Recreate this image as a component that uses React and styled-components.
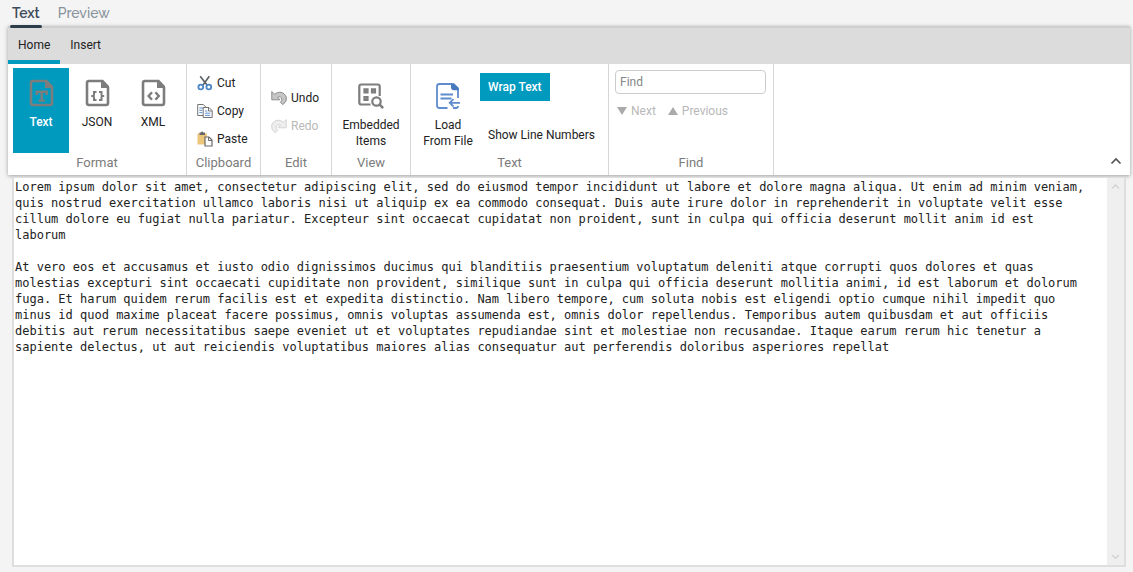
import React from "react";
import styled, { createGlobalStyle, css } from "styled-components";

const GlobalStyle = createGlobalStyle`
  *, *::before, *::after { box-sizing: border-box; }
  body {
    margin: 0;
    background: #f4f4f4;
    color: #222;
    font: 12px/16px Roboto, "Liberation Sans", sans-serif;
  }
  button, input, textarea {
    margin: 0;
    padding: 0;
    border: 0;
    background: none;
    color: inherit;
    font: inherit;
  }
`;

const accent = "#009abf";

const Page = styled.div`
  display: flex;
  flex-direction: column;
  min-height: 100vh;
  padding: 0 3px 5px 8px;
`;

const ViewTabs = styled.nav`
  display: flex;
  gap: 14px;
  padding-left: 2px;
  height: 26px;
`;

const ViewTab = styled.button`
  position: relative;
  height: 26px;
  padding: 0 2px;
  font: 500 14px/26px Raleway, Lato, sans-serif;
  font-weight: ${(p) => (p.$active ? 600 : 500)};
  color: ${(p) => (p.$active ? "#3c4b59" : "#87929b")};
  ${(p) =>
    p.$active &&
    css`
      &::after {
        content: "";
        position: absolute;
        left: 0;
        right: 0;
        bottom: -2px;
        height: 3px;
        border-radius: 2px;
        background: #2d3c49;
      }
    `}
`;

const Ribbon = styled.section`
  display: flex;
  flex-direction: column;
  box-shadow: 0 1px 4px rgba(0, 0, 0, 0.35);
`;

const RibbonTabs = styled.div`
  display: flex;
  height: 38px;
  background: #dcdcdc;
  border-top: 2px solid #cfcfcf;
`;

const RibbonTab = styled.button`
  padding: 2px 10px 0;
  border-bottom: 4px solid ${(p) => (p.$active ? accent : "transparent")};
  line-height: 30px;
`;

const RibbonBody = styled.div`
  display: flex;
  height: 111px;
  background: #fff;
`;

const Group = styled.div`
  display: flex;
  flex-direction: column;
  width: ${(p) => p.$width}px;
  border-right: 1px solid #d6d6d6;
`;

const GroupContent = styled.div`
  display: flex;
  flex: 1;
  padding: 4px 5px 0;
`;

const GroupLabel = styled.div`
  height: 21px;
  font-size: 13px;
  line-height: 18px;
  text-align: center;
  color: #7b7b7b;
`;

const LargeButton = styled.button`
  display: flex;
  flex-direction: column;
  align-items: center;
  gap: 5px;
  flex: 1;
  height: 85px;
  padding-top: ${(p) => (p.$twoLine ? 12 : 9)}px;
  background: ${(p) => (p.$active ? accent : "transparent")};
  color: ${(p) => (p.$active ? "#fff" : "inherit")};
  font-weight: ${(p) => (p.$active ? 500 : 400)};
  white-space: pre;
`;

const SmallColumn = styled.div`
  display: flex;
  flex-direction: column;
  justify-content: ${(p) => (p.$centered ? "center" : "flex-start")};
  padding: 1px 0 0 5px;
`;

const SmallButton = styled.button`
  display: flex;
  align-items: center;
  gap: 4px;
  height: 28px;
  &:disabled { color: #b8b8b8; }
`;

const ToggleColumn = styled.div`
  display: flex;
  flex-direction: column;
  align-items: flex-start;
  gap: 20px;
  padding-top: 5px;
`;

const ToggleButton = styled.button`
  height: 28px;
  padding: 0 8px;
  background: ${(p) => (p.$active ? accent : "transparent")};
  color: ${(p) => (p.$active ? "#fff" : "inherit")};
  font-weight: ${(p) => (p.$active ? 500 : 400)};
  white-space: nowrap;
`;

const FindPanel = styled.div`
  display: flex;
  flex: 1;
  flex-direction: column;
  gap: 3px;
  padding: 2px 2px 0 1px;
`;

const FindInput = styled.input`
  width: 100%;
  height: 24px;
  padding: 0 4px;
  border: 1px solid #ccc;
  border-radius: 4px;
  background: #fff;
  &::placeholder { color: #858585; opacity: 1; }
`;

const FindActions = styled.div`
  display: flex;
  gap: 12px;
  padding-left: 2px;
`;

const Collapse = styled.button`
  display: flex;
  align-self: flex-end;
  margin-left: auto;
  padding: 8px;
`;

const Editor = styled.div`
  display: flex;
  flex: 1;
  margin: 2px 4px 0;
  border: 2px solid #dedede;
  border-top-width: 1px;
  background: #fff;
`;

const TextInput = styled.textarea`
  flex: 1;
  padding: 1px 20px 0 1px;
  outline: 0;
  resize: none;
  overflow: hidden;
  font: 12px/16px "DejaVu Sans Mono", "Liberation Mono", monospace;
`;

const ScrollTrack = styled.div`
  display: flex;
  flex-direction: column;
  justify-content: space-between;
  width: 17px;
  background: #efefef;
`;

const ScrollButton = styled.button`
  display: flex;
  justify-content: center;
  align-items: center;
  height: 17px;
`;

function FileIcon({ children }) {
  return (
    <svg width="32" height="32" viewBox="0 0 32 32" fill="none" stroke="#7d7d7d" strokeWidth="2.6" aria-hidden="true">
      <path d="M20 4H8a2 2 0 0 0-2 2v20a2 2 0 0 0 2 2h17a2 2 0 0 0 2-2V10" />
      <path d="M20 2.7h2L28 9v2h-8z" fill="#7d7d7d" stroke="none" />
      {children}
    </svg>
  );
}

function TextFileIcon() {
  return (
    <FileIcon>
      <path d="M11.7 18v-3.3h10V18M16.7 14.7V24M13.5 23.6h6.4" strokeWidth="2.4" />
    </FileIcon>
  );
}

function JsonFileIcon() {
  return (
    <FileIcon>
      <path d="M15.5 15H13v3l-1.500 1L13 20v3h2.500M18 15h2.500v3l1.500 1-1.500 1v3H18" strokeWidth="2" />
      <path d="M10.500 19h2M21 19h2" strokeWidth="2" />
    </FileIcon>
  );
}

function XmlFileIcon() {
  return (
    <FileIcon>
      <path d="M15 15.2 11.6 19l3.4 3.8M18.4 15.2l3.4 3.8-3.4 3.8" strokeWidth="2.4" />
    </FileIcon>
  );
}

function EmbeddedIcon() {
  return (
    <svg width="32" height="32" viewBox="0 0 32 32" fill="none" stroke="#7d7d7d" strokeWidth="2.2" aria-hidden="true">
      <path d="M15.5 24.5H6.3a2 2 0 0 1-2-2v-16a2 2 0 0 1 2-2h16.4a2 2 0 0 1 2 2V16" />
      <path d="M9.5 9.3h3v3h-3zM17 9.3h3v3h-3zM9.5 17h3v3h-3z" fill="#a5a5a5" />
      <circle cx="21.5" cy="21.5" r="4.2" />
      <path d="m24.7 24.7 3.4 3.4" strokeWidth="2.6" />
    </svg>
  );
}

function LoadIcon() {
  return (
    <svg width="32" height="32" viewBox="0 0 32 32" fill="none" stroke="#5f8ccc" strokeWidth="1.8" aria-hidden="true">
      <path d="M20 4H7.5A2.5 2.5 0 0 0 5 6.5v19A2.5 2.5 0 0 0 7.5 28h8M26 10v8M21 28h3q2 0 2-2" />
      <path d="M19 3.2h3L26.9 8v2.2H22q-3 0-3-3z" fill="#4679bd" stroke="none" />
      <path d="M8.5 14.5H21M8.5 18.5h11M17.5 22.8H28M21.5 19.1l-3.8 3.7 3.8 3.7" />
    </svg>
  );
}

function CutIcon() {
  return (
    <svg width="16" height="16" viewBox="0 0 16 16" fill="none" aria-hidden="true">
      <path d="M3.2 1.2 10 10M12.3 1.2 6 10" stroke="#5e6266" strokeWidth="1.7" />
      <circle cx="3.8" cy="12" r="2.4" stroke="#4b86c5" strokeWidth="1.8" />
      <circle cx="11.8" cy="12" r="2.4" stroke="#4b86c5" strokeWidth="1.8" />
    </svg>
  );
}

function CopyIcon() {
  return (
    <svg width="16" height="16" viewBox="0 0 16 16" fill="#fff" stroke="#737373" aria-hidden="true">
      <path d="M.7 1.5h5.6l2.5 2.6v8.4H.7z" />
      <path d="M2.3 5h4M2.3 7.3h3M2.3 9.6h3" stroke="#5b91cf" />
      <path d="M6.2 4.5H12l3.2 3.2v6.8h-9z" />
      <path d="M11.5 4.7V8H15" fill="none" />
      <path d="M8 8h2.3M8 10.2h5.3M8 12.4h5.3" stroke="#5b91cf" />
    </svg>
  );
}

function PasteIcon() {
  return (
    <svg width="16" height="16" viewBox="0 0 16 16" aria-hidden="true">
      <path d="M.5 2.500h9.500v11H.5z" fill="#ecc67a" />
      <path d="M2.500 1.500H4Q5-.3 6.300 1.500H8V4H2.500z" fill="#686868" />
      <path d="M8 6h4l3 3v6H8z" fill="#fff" stroke="#696969" strokeWidth="1.2" />
      <path d="M11.5 6v3.5H15" fill="none" stroke="#696969" />
    </svg>
  );
}

function UndoIcon({ flipped }) {
  return (
    <svg width="16" height="16" viewBox="0 0 16 16" aria-hidden="true">
      <path
        transform={flipped ? "translate(16 0) scale(-1 1)" : undefined}
        d="M.8 1.500v8.300H9L6.600 7.300Q9.300 5.600 10.600 8q1 2.300-1.200 4.400L12 14.600Q16.500 11.200 15.300 7C13 1.600 7.600 1 3.600 4.300z"
        fill={flipped ? "#eeeeee" : "#c6c6c6"}
        stroke={flipped ? "#d4d4d4" : "#8c8c8c"}
      />
    </svg>
  );
}

function Triangle({ up }) {
  return (
    <svg width="10" height="8" viewBox="0 0 10 8" fill="#aaa" aria-hidden="true">
      <path d={up ? "M5 0l5 8H0z" : "M0 0h10L5 8z"} />
    </svg>
  );
}

function Chevron({ size, color, down }) {
  return (
    <svg width={size} height={size} viewBox="0 0 12 12" fill="none" stroke={color} strokeWidth="1.7" aria-hidden="true">
      <path d={down ? "m1.5 4 4.5 4.5L10.5 4" : "M1.5 8.5 6 4l4.5 4.5"} />
    </svg>
  );
}

const sampleText = `Lorem ipsum dolor sit amet, consectetur adipiscing elit, sed do eiusmod tempor incididunt ut labore et dolore magna aliqua. Ut enim ad minim veniam, quis nostrud exercitation ullamco laboris nisi ut aliquip ex ea commodo consequat. Duis aute irure dolor in reprehenderit in voluptate velit esse cillum dolore eu fugiat nulla pariatur. Excepteur sint occaecat cupidatat non proident, sunt in culpa qui officia deserunt mollit anim id est laborum

At vero eos et accusamus et iusto odio dignissimos ducimus qui blanditiis praesentium voluptatum deleniti atque corrupti quos dolores et quas molestias excepturi sint occaecati cupiditate non provident, similique sunt in culpa qui officia deserunt mollitia animi, id est laborum et dolorum fuga. Et harum quidem rerum facilis est et expedita distinctio. Nam libero tempore, cum soluta nobis est eligendi optio cumque nihil impedit quo minus id quod maxime placeat facere possimus, omnis voluptas assumenda est, omnis dolor repellendus. Temporibus autem quibusdam et aut officiis debitis aut rerum necessitatibus saepe eveniet ut et voluptates repudiandae sint et molestiae non recusandae. Itaque earum rerum hic tenetur a sapiente delectus, ut aut reiciendis voluptatibus maiores alias consequatur aut perferendis doloribus asperiores repellat`;

export default function App() {
  return (
    <>
      <GlobalStyle />
      <Page>
        <ViewTabs>
          <ViewTab $active>Text</ViewTab>
          <ViewTab>Preview</ViewTab>
        </ViewTabs>
        <Ribbon>
          <RibbonTabs>
            <RibbonTab $active>Home</RibbonTab>
            <RibbonTab>Insert</RibbonTab>
          </RibbonTabs>
          <RibbonBody>
            <Group $width={179}>
              <GroupContent>
                <LargeButton $active><TextFileIcon />Text</LargeButton>
                <LargeButton><JsonFileIcon />JSON</LargeButton>
                <LargeButton><XmlFileIcon />XML</LargeButton>
              </GroupContent>
              <GroupLabel>Format</GroupLabel>
            </Group>
            <Group $width={74}>
              <GroupContent>
                <SmallColumn>
                  <SmallButton><CutIcon />Cut</SmallButton>
                  <SmallButton><CopyIcon />Copy</SmallButton>
                  <SmallButton><PasteIcon />Paste</SmallButton>
                </SmallColumn>
              </GroupContent>
              <GroupLabel>Clipboard</GroupLabel>
            </Group>
            <Group $width={71}>
              <GroupContent>
                <SmallColumn $centered>
                  <SmallButton><UndoIcon />Undo</SmallButton>
                  <SmallButton disabled><UndoIcon flipped />Redo</SmallButton>
                </SmallColumn>
              </GroupContent>
              <GroupLabel>Edit</GroupLabel>
            </Group>
            <Group $width={79}>
              <GroupContent>
                <LargeButton $twoLine><EmbeddedIcon />{"Embedded\nItems"}</LargeButton>
              </GroupContent>
              <GroupLabel>View</GroupLabel>
            </Group>
            <Group $width={198}>
              <GroupContent>
                <LargeButton $twoLine><LoadIcon />{"Load\nFrom File"}</LargeButton>
                <ToggleColumn>
                  <ToggleButton $active>Wrap Text</ToggleButton>
                  <ToggleButton>Show Line Numbers</ToggleButton>
                </ToggleColumn>
              </GroupContent>
              <GroupLabel>Text</GroupLabel>
            </Group>
            <Group $width={165}>
              <GroupContent>
                <FindPanel>
                  <FindInput type="text" placeholder="Find" aria-label="Find" />
                  <FindActions>
                    <SmallButton disabled><Triangle />Next</SmallButton>
                    <SmallButton disabled><Triangle up />Previous</SmallButton>
                  </FindActions>
                </FindPanel>
              </GroupContent>
              <GroupLabel>Find</GroupLabel>
            </Group>
            <Collapse aria-label="Collapse ribbon"><Chevron size={12} color="#555" /></Collapse>
          </RibbonBody>
        </Ribbon>
        <Editor>
          <TextInput aria-label="Text content" spellCheck={false} defaultValue={sampleText} />
          <ScrollTrack>
            <ScrollButton aria-label="Scroll up"><Chevron size={9} color="#d0d0d0" /></ScrollButton>
            <ScrollButton aria-label="Scroll down"><Chevron size={9} color="#d0d0d0" down /></ScrollButton>
          </ScrollTrack>
        </Editor>
      </Page>
    </>
  );
}
